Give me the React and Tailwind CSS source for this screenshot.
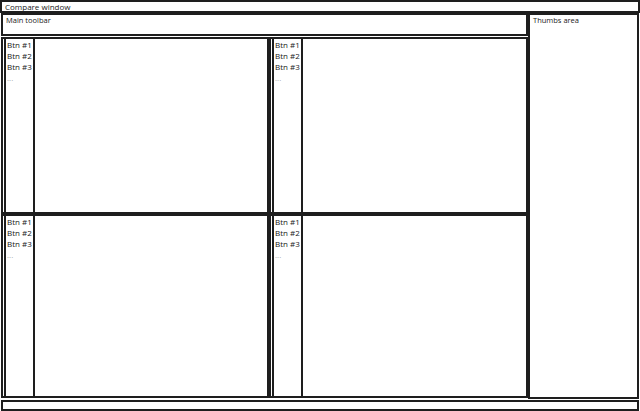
import React from "react";

function Pane() {
  return (
    <div className="flex min-h-0 border-2 border-[#1e1e1e] bg-white">
      <div className="ml-[1px] flex w-[31px] flex-col border-x-2 border-[#1e1e1e] pl-[1px] text-[8px] leading-[11px] text-[#222]">
        <span>Btn #1</span>
        <span>Btn #2</span>
        <span>Btn #3</span>
        <span className="text-[#aaa]">...</span>
      </div>
      <div className="flex-1" />
    </div>
  );
}

export default function App() {
  return (
    <div
      className="flex h-[411px] w-[640px] flex-col bg-white"
      style={{ fontFamily: '"Open Sans", "Liberation Sans", sans-serif' }}
    >
      <div className="flex h-[13px] items-center border-2 border-[#1e1e1e] px-[3px] text-[8px] text-[#222]">
        Compare window
      </div>
      <div className="flex h-[386px] pl-[1px] pr-[1px]">
        <div className="flex w-[527px] flex-col">
          <div className="h-[23px] border-2 border-[#1e1e1e] px-[3px] text-[7.5px] text-[#222]">
            Main toolbar
          </div>
          <div className="mt-[1px] grid flex-1 grid-cols-[268px_259px] grid-rows-[177px_184px]">
            <Pane />
            <Pane />
            <Pane />
            <Pane />
          </div>
        </div>
        <div className="flex-1 border-2 border-[#1e1e1e] px-[3px] text-[7.5px] text-[#222]">
          Thumbs area
        </div>
      </div>
      <div className="mx-[1px] mt-[1px] h-[11px] border-2 border-[#1e1e1e]" />
    </div>
  );
}
